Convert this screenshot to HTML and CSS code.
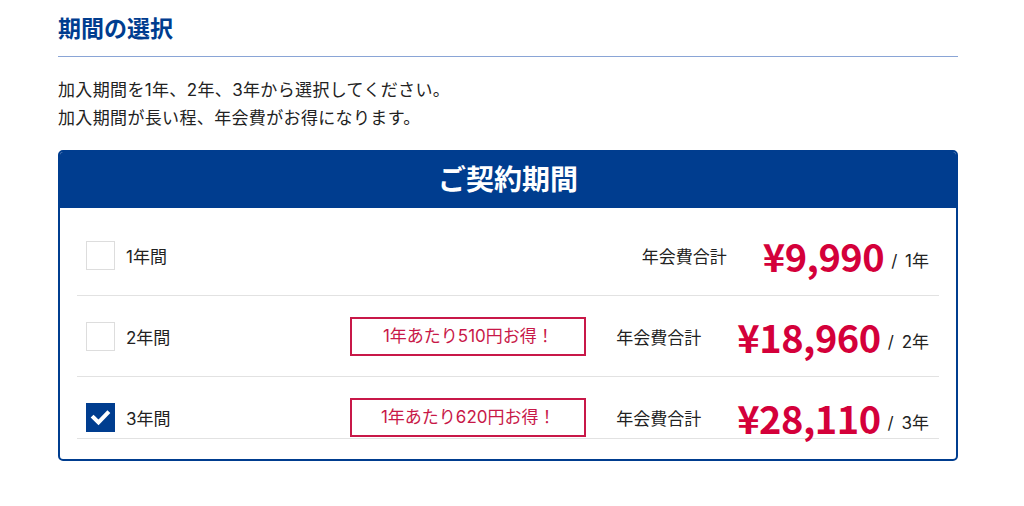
FILE: index.html
```html
<!DOCTYPE html>
<html lang="ja">
<head>
    <meta charset="UTF-8">
    <meta name="viewport" content="width=device-width, initial-scale=1.0">
    <title>期間の選択</title>
    <link rel="stylesheet" href="styles.css">
</head>
<body>
    <div class="section">
        <h2 class="section-title">期間の選択</h2>
        <p class="lead">加入期間を1年、2年、3年から選択してください。<br>加入期間が長い程、年会費がお得になります。</p>

        <div class="plan-card">
            <div class="plan-card-header">ご契約期間</div>
            <div class="plan-list">
                <label class="plan">
                    <span class="checkbox"></span>
                    <span class="plan-name">1年間</span>
                    <span class="plan-total">年会費合計</span>
                    <span class="plan-price">¥9,990</span>
                    <span class="plan-unit">/ 1年</span>
                </label>
                <label class="plan">
                    <span class="checkbox"></span>
                    <span class="plan-name">2年間</span>
                    <span class="plan-badge">1年あたり510円お得！</span>
                    <span class="plan-total">年会費合計</span>
                    <span class="plan-price">¥18,960</span>
                    <span class="plan-unit">/ 2年</span>
                </label>
                <label class="plan is-checked">
                    <span class="checkbox">
                        <svg width="29" height="29" viewBox="0 0 29 29"><polyline points="7.5,14.5 12.5,19.5 21.5,10" fill="none" stroke="#fff" stroke-width="4" stroke-linecap="square"/></svg>
                    </span>
                    <span class="plan-name">3年間</span>
                    <span class="plan-badge">1年あたり620円お得！</span>
                    <span class="plan-total">年会費合計</span>
                    <span class="plan-price">¥28,110</span>
                    <span class="plan-unit">/ 3年</span>
                </label>
            </div>
        </div>
    </div>
</body>
</html>
```

FILE: styles.css
```css
:root {
    --navy: #003d8f;
    --rule-blue: #8aa5d6;
    --text: #222222;
    --red: #d4003a;
    --badge-red: #c81848;
    --line: #e2e2e2;
}

body {
    margin: 0;
    background: #ffffff;
    color: var(--text);
    font-family: Inter, "Noto Sans CJK JP", sans-serif;
}

.section {
    width: 900px;
    padding: 13px 0 0 58px;
}

.section-title {
    margin: 0;
    padding-bottom: 10px;
    border-bottom: 1px solid var(--rule-blue);
    color: var(--navy);
    font-size: 23px;
    font-weight: 700;
    line-height: 33px;
}

.lead {
    margin: 19px 0 0;
    font-size: 17px;
    line-height: 28px;
    letter-spacing: 0.35px;
}

.plan-card {
    margin-top: 18px;
    border: 2px solid var(--navy);
    border-radius: 5px;
    overflow: hidden;
}

.plan-card-header {
    height: 56px;
    background: var(--navy);
    color: #ffffff;
    font-size: 28px;
    font-weight: 700;
    line-height: 56px;
    text-align: center;
}

.plan-list {
    padding: 7px 17px 20px;
}

.plan {
    display: flex;
    align-items: center;
    height: 41px;
    padding: 20px 10px 19px 9px;
    border-bottom: 1px solid var(--line);
}

.plan:last-child {
    padding-bottom: 0;
}

.checkbox {
    width: 27px;
    height: 27px;
    border: 1px solid #dddddd;
    flex-shrink: 0;
}

.is-checked .checkbox {
    width: 29px;
    height: 29px;
    border: none;
    background: var(--navy);
}

.checkbox svg {
    display: block;
}

.plan-name {
    margin-left: 11px;
    font-size: 17px;
    flex: 1;
}

.plan-badge {
    width: 232px;
    height: 35px;
    border: 2px solid var(--badge-red);
    color: var(--badge-red);
    font-size: 17px;
    line-height: 35px;
    text-align: center;
    margin-right: 30px;
}

.plan-total {
    font-size: 17px;
    margin-right: 36px;
}

.plan-price {
    color: var(--red);
    font-family: "Noto Sans CJK JP", sans-serif;
    font-size: 38px;
    font-weight: 700;
    line-height: 41px;
    letter-spacing: -0.5px;
}

.plan-unit {
    margin-left: 7px;
    font-size: 17px;
    word-spacing: 3px;
    align-self: flex-end;
    line-height: 30px;
}
```
